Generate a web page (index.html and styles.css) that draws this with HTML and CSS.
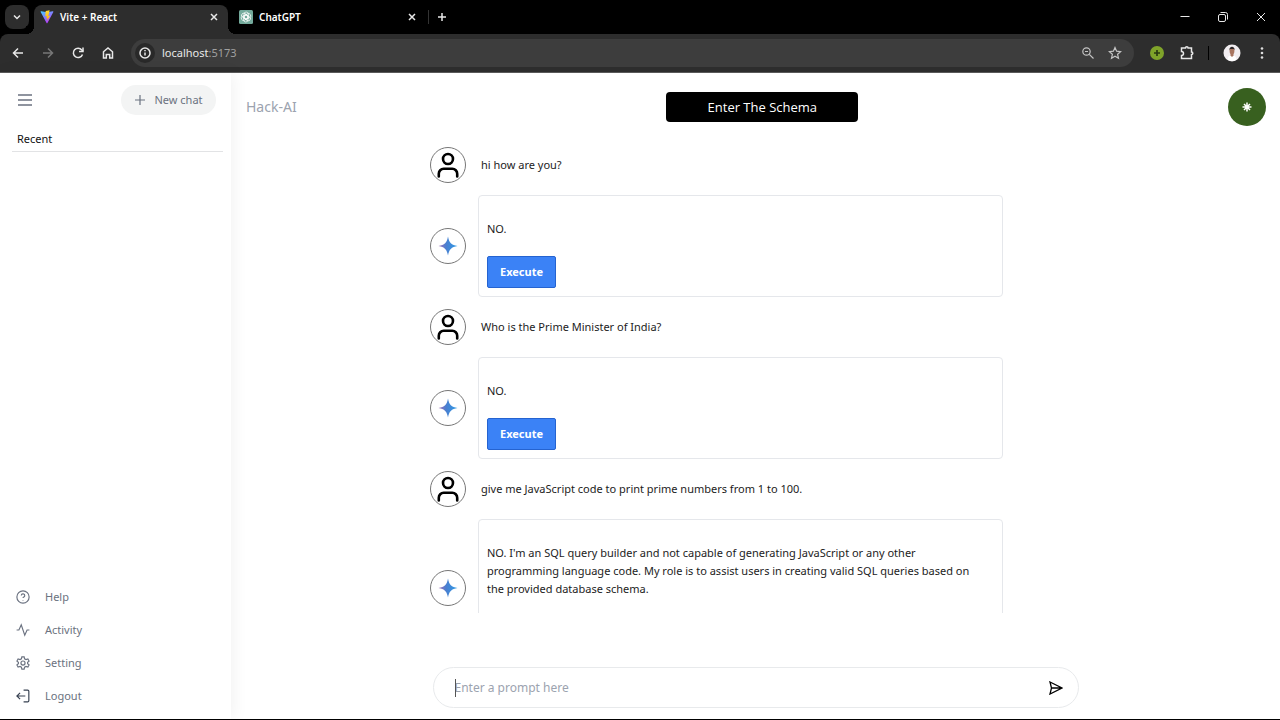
FILE: index.html
```html
<!DOCTYPE html>
<html lang="en">
<head>
<meta charset="utf-8">
<title>Vite + React</title>
<link rel="stylesheet" href="styles.css">
</head>
<body>
<svg class="defs" aria-hidden="true">
  <defs>
    <linearGradient id="spark-fill" x1="0" y1="0" x2="1" y2="0"><stop offset="0" stop-color="#a36fb5"/><stop offset=".4" stop-color="#4a7fd0"/><stop offset="1" stop-color="#2f9be6"/></linearGradient>
    <linearGradient id="vite-fill" x1="0" y1="0" x2=".6" y2="1"><stop offset="0" stop-color="#41d1ff"/><stop offset="1" stop-color="#bd34fe"/></linearGradient>
    <linearGradient id="bolt-fill" x1="0" y1="0" x2="0" y2="1"><stop offset="0" stop-color="#ffdd35"/><stop offset="1" stop-color="#ffa800"/></linearGradient>
    <symbol id="user" viewBox="0 0 24 24"><circle cx="12" cy="6.500" r="4.600"/><path d="M3.500 22.500v-2.500a4.500 4.500 0 0 1 4.500-4.500h8a4.500 4.500 0 0 1 4.500 4.500v2.500" stroke-linecap="round"/></symbol>
    <symbol id="spark" viewBox="0 0 24 24"><path d="M12 2.500C13 8.500 15.500 11 21.500 12C15.500 13 13 15.500 12 21.500C11 15.500 8.500 13 2.500 12C8.500 11 11 8.500 12 2.500Z" fill="url(#spark-fill)" stroke="none"/></symbol>
    <symbol id="close" viewBox="0 0 12 12"><path d="M3 3l6 6M9 3l-6 6"/></symbol>
  </defs>
</svg>

<header class="browser">
  <div class="tabs">
    <button class="tab-menu" aria-label="Search tabs"><svg viewBox="0 0 12 12" width="12" height="12"><path d="M3 4.500l3 3 3-3"/></svg></button>
    <div class="tab tab-active">
      <svg class="favicon" viewBox="0 0 32 32"><path d="M30.500 4.500L17 29.500c-.5.800-1.500.800-2 0L1.500 4.500C1 3.500 2 2.500 3 2.700L16 5l13-2.300c1-.2 2 .8 1.500 1.800z" fill="url(#vite-fill)" stroke="none"/><path d="M22 .500L13 2.500l-1 12 3.500-.8-1 6 3-.9-1.500 7L23 13l-4 .8 3-13.300z" fill="url(#bolt-fill)" stroke="none"/></svg>
      <span class="tab-title">Vite + React</span>
      <button class="tab-close" aria-label="Close Vite + React"><svg width="12" height="12"><use href="#close"/></svg></button>
    </div>
    <div class="tab">
      <svg class="favicon" viewBox="0 0 14 14"><rect width="14" height="14" rx="1.500" fill="#74aa9c" stroke="none"/><g stroke="#fff" stroke-width=".7"><rect x="5" y="2" width="4.400" height="7" rx="2.200"/><rect x="5" y="2" width="4.400" height="7" rx="2.200" transform="rotate(60 7 7)"/><rect x="5" y="2" width="4.400" height="7" rx="2.200" transform="rotate(120 7 7)"/><rect x="5" y="2" width="4.400" height="7" rx="2.200" transform="rotate(180 7 7)"/><rect x="5" y="2" width="4.400" height="7" rx="2.200" transform="rotate(240 7 7)"/><rect x="5" y="2" width="4.400" height="7" rx="2.200" transform="rotate(300 7 7)"/></g></svg>
      <span class="tab-title">ChatGPT</span>
      <button class="tab-close" aria-label="Close ChatGPT"><svg width="12" height="12"><use href="#close"/></svg></button>
    </div>
    <button class="new-tab" aria-label="New tab"><svg viewBox="0 0 12 12" width="12" height="12"><path d="M6 2v8M2 6h8"/></svg></button>
    <div class="window-controls">
      <button aria-label="Minimize"><svg class="thin" viewBox="0 0 12 12" width="12" height="12"><path d="M1.500 5.500h9"/></svg></button>
      <button aria-label="Restore"><svg class="thin" viewBox="0 0 12 12" width="12" height="12"><rect x="1.500" y="3.500" width="7" height="7" rx="1.500"/><path d="M3.500 1.500h5a2 2 0 0 1 2 2v5"/></svg></button>
      <button aria-label="Close"><svg class="thin" viewBox="0 0 12 12" width="12" height="12"><path d="M2 2l8 8M10 2l-8 8"/></svg></button>
    </div>
  </div>
  <div class="toolbar">
    <button aria-label="Back"><svg viewBox="0 0 14 14" width="14" height="14"><path d="M12 7H2.500M7 2.500L2.500 7 7 11.500"/></svg></button>
    <button class="dim" aria-label="Forward"><svg viewBox="0 0 14 14" width="14" height="14"><path d="M2 7h9.500M7 2.500L11.500 7 7 11.500"/></svg></button>
    <button aria-label="Reload"><svg viewBox="0 0 14 14" width="14" height="14"><path d="M11.500 8.500A4.700 4.700 0 1 1 10.800 4L12 5.300"/><path d="M12 1.500v4H8"/></svg></button>
    <button aria-label="Home"><svg viewBox="0 0 14 14" width="14" height="14"><path d="M2.500 5.800L7 2l4.500 3.800V12H8.700V8.500H5.300V12H2.500z"/></svg></button>
    <div class="address">
      <button class="site-info" aria-label="Site information"><svg viewBox="0 0 14 14" width="14" height="14"><circle cx="7" cy="7" r="5"/><path d="M7 6.500v3M7 4v1.300"/></svg></button>
      <span class="url">localhost<span class="port">:5173</span></span>
      <button aria-label="Zoom"><svg class="soft" viewBox="0 0 14 14" width="14" height="14"><circle cx="5.500" cy="5.500" r="3.700"/><path d="M8.300 8.300l4.200 4.200M4 5.500h3"/></svg></button>
      <button aria-label="Bookmark"><svg class="soft" viewBox="0 0 14 14" width="14" height="14"><path d="M7 1.500l1.600 3.700 4 .4-3 2.700.9 4L7 10.200l-3.500 2.100.9-4-3-2.700 4-.4z"/></svg></button>
    </div>
    <div class="extensions">
      <button aria-label="Add extension"><svg viewBox="0 0 14 14" width="14" height="14"><circle cx="7" cy="7" r="7" fill="#7fa32a" stroke="none"/><path d="M7 4v6M4 7h6" stroke="#2b3b12" stroke-width="1.700"/></svg></button>
      <button aria-label="Extensions"><svg viewBox="0 0 16 16" width="16" height="16"><path d="M3.500 3H7.500a1.300 1.300 0 0 1 2.600 0h3.400V7a1.300 1.300 0 0 1 0 2.600V13.500h-10V10.500a2 2 0 0 0 0-4z"/></svg></button>
      <span class="divider"></span>
      <button aria-label="Profile"><svg viewBox="0 0 18 18" width="18" height="18"><circle cx="9" cy="9" r="8.500" fill="#f1edf0" stroke="none"/><path d="M4.500 15.500q.5-4.500 4.500-4.500t4.500 4.500Q9 18.500 4.500 15.500z" fill="#fff" stroke="none"/><path d="M7.500 9h3v2.500L9 13l-1.500-1.500z" fill="#a87560" stroke="none"/><ellipse cx="9" cy="7" rx="2.400" ry="3.200" fill="#a87560" stroke="none"/><path d="M6.300 6.500C6 1.500 12 1.500 11.700 6.500L11 5H7z" fill="#2b2526" stroke="none"/></svg></button>
      <button aria-label="Menu"><svg viewBox="0 0 14 14" width="14" height="14"><g fill="#ddd" stroke="none"><circle cx="7" cy="2.500" r="1.300"/><circle cx="7" cy="7" r="1.300"/><circle cx="7" cy="11.500" r="1.300"/></g></svg></button>
    </div>
  </div>
</header>

<div class="app">
  <aside class="sidebar">
    <div class="sidebar-top">
      <button class="menu" aria-label="Toggle menu"><svg viewBox="0 0 16 16" width="16" height="16"><path d="M1 3h14M1 8h14M1 13h14"/></svg></button>
      <button class="new-chat"><svg viewBox="0 0 12 12" width="12" height="12"><path d="M6 1v10M1 6h10"/></svg>New chat</button>
    </div>
    <h2 class="recent">Recent</h2>
    <nav class="links">
      <a href="#help"><svg viewBox="0 0 24 24"><circle cx="12" cy="12" r="10.500"/><path d="M9 9.300a3 3 0 0 1 6 .5c0 2-3 2.500-3 4M12 17v1"/></svg>Help</a>
      <a href="#activity"><svg viewBox="0 0 24 24"><path d="M1 12h4L9 3l6 18 4-9h4"/></svg>Activity</a>
      <a href="#setting"><svg viewBox="0 0 24 24"><circle cx="12" cy="12" r="3.500"/><path d="M10 1.500h4l.7 3.300 2.500 1.400 3.200-1 2 3.500-2.500 2.200v2.200l2.500 2.200-2 3.500-3.200-1-2.500 1.400-.7 3.300h-4l-.7-3.300-2.500-1.400-3.200 1-2-3.500 2.500-2.200v-2.200L1.600 8.700l2-3.500 3.200 1 2.500-1.400z"/></svg>Setting</a>
      <a href="#logout"><svg class="dark" viewBox="0 0 24 24"><path d="M16 12H2M7 6.500L1.500 12 7 17.500M13 2h7a2 2 0 0 1 2 2v16a2 2 0 0 1-2 2h-7"/></svg>Logout</a>
    </nav>
  </aside>

  <main class="main">
    <div class="main-top">
      <h1 class="brand">Hack-AI</h1>
      <button class="schema">Enter The Schema</button>
      <button class="account" aria-label="Account"><svg viewBox="0 0 12 12" width="12" height="12"><path d="M6 1.500v9M1.500 6h9M3 3l6 6M9 3L3 9"/></svg></button>
    </div>

    <div class="chat">
      <div class="row"><span class="avatar"><svg class="user"><use href="#user"/></svg></span><p class="question">hi how are you?</p></div>
      <div class="row"><span class="avatar"><svg class="spark"><use href="#spark"/></svg></span><div class="answer"><p>NO.</p><button class="execute">Execute</button></div></div>
      <div class="row"><span class="avatar"><svg class="user"><use href="#user"/></svg></span><p class="question">Who is the Prime Minister of India?</p></div>
      <div class="row"><span class="avatar"><svg class="spark"><use href="#spark"/></svg></span><div class="answer"><p>NO.</p><button class="execute">Execute</button></div></div>
      <div class="row"><span class="avatar"><svg class="user"><use href="#user"/></svg></span><p class="question">give me JavaScript code to print prime numbers from 1 to 100.</p></div>
      <div class="row"><span class="avatar"><svg class="spark"><use href="#spark"/></svg></span><div class="answer answer-last"><p>NO. I'm an SQL query builder and not capable of generating JavaScript or any other programming language code. My role is to assist users in creating valid SQL queries based on the provided database schema.</p></div></div>
    </div>

    <form class="prompt">
      <input type="text" placeholder="Enter a prompt here" aria-label="Prompt">
      <button type="button" aria-label="Send"><svg viewBox="0 0 14 14" width="14" height="14"><path d="M1 1l12 6-12 6 1.500-6zM2.500 7H13"/></svg></button>
    </form>
  </main>
</div>
</body>
</html>
```
FILE: styles.css
```css
* { box-sizing: border-box; }

body {
  margin: 0;
  height: 100vh;
  display: flex;
  flex-direction: column;
  overflow: hidden;
  background: #fff;
  border-bottom: 1px solid #000;
  color: #1c1c1c;
  font-family: "Noto Sans", "Open Sans", sans-serif;
  font-size: 11px;
  line-height: 18px;
}

h1, h2, p { margin: 0; font-weight: 400; }

button {
  display: flex;
  align-items: center;
  justify-content: center;
  margin: 0;
  padding: 0;
  border: 0;
  background: none;
  color: inherit;
  font: inherit;
}

svg {
  flex: none;
  fill: none;
  stroke: currentColor;
  stroke-width: 1.5;
}

.defs { position: absolute; width: 0; height: 0; }

/* Browser frame */
.browser { flex: none; background: #000; color: #e8e8e8; }

.tabs { display: flex; height: 34px; padding: 5px 0 0 5px; }
.tab-menu { width: 24px; height: 24px; border-radius: 8px; background: #2d2d2d; }
.tab {
  display: flex;
  align-items: center;
  width: 194px;
  padding: 0 8px 5px 6px;
  margin-left: 5px;
}
.tab + .tab { padding-right: 9px; }
.tab-active {
  position: relative;
  background: #2d2d2d;
  border-radius: 8px 8px 0 0;
}
.tab-active::before, .tab-active::after {
  content: "";
  position: absolute;
  bottom: 0;
  width: 8px;
  height: 8px;
}
.tab-active::before { left: -8px; background: radial-gradient(circle at 0 0, #000 8px, #2d2d2d 8px); }
.tab-active::after { right: -8px; background: radial-gradient(circle at 100% 0, #000 8px, #2d2d2d 8px); }
.favicon { width: 14px; height: 14px; }
.tab-title { flex: 1; margin-left: 6px; font-size: 10px; font-weight: 600; color: #fff; }
.new-tab { height: 24px; margin-left: 1px; }
.new-tab::before { content: ""; width: 1px; height: 14px; margin-right: 7px; background: #333; }
.window-controls { display: flex; margin: 0 13px 0 auto; gap: 26px; height: 24px; }
.thin { stroke-width: 1; }

.toolbar {
  display: flex;
  align-items: center;
  height: 39px;
  padding: 0 11px;
  gap: 16px;
  background: #2d2d2d;
  border-bottom: 1px solid #5a5a5a;
  border-radius: 8px 8px 0 0;
}
.dim { color: #777; }
.address {
  flex: 1;
  display: flex;
  align-items: center;
  gap: 13px;
  height: 28px;
  padding: 0 12px 0 4px;
  border-radius: 14px;
  background: #3d3d3d;
}
.site-info { width: 20px; height: 20px; border-radius: 10px; background: #292929; }
.url { flex: 1; margin-left: -6px; }
.port { color: #a0a0a0; }
.soft { stroke-width: 1.2; color: #c4c4c4; }
.extensions { display: flex; align-items: center; gap: 14px; }
.divider { width: 1px; height: 14px; background: #000; }

/* Application */
.app { flex: 1; min-height: 0; display: flex; }

.sidebar {
  flex: none;
  display: flex;
  flex-direction: column;
  width: 231px;
  padding: 12px 8px 8px 12px;
  box-shadow: 2px 0 16px rgba(0, 0, 0, .06);
  color: #6b7280;
}
.sidebar-top { display: flex; justify-content: space-between; align-items: center; padding: 0 7px 0 5px; }
.new-chat { width: 95px; height: 30px; gap: 8px; border-radius: 15px; background: #f3f4f4; }
.new-chat svg { stroke-width: 1.2; }
.recent {
  margin-top: 15px;
  padding: 0 5px 3px;
  border-bottom: 1px solid #e2e3e5;
  color: #111;
  font-size: 11px;
}
.links { display: flex; flex-direction: column; gap: 15px; margin-top: auto; padding: 0 4px 6px; }
.links a { display: flex; align-items: center; gap: 15px; color: inherit; text-decoration: none; }
.links svg { width: 14px; height: 14px; stroke-width: 2; }
.links .dark { color: #374151; }

.main { flex: 1; min-width: 0; display: flex; flex-direction: column; }
.main-top { display: flex; align-items: center; justify-content: space-between; padding: 15px 14px 0 15px; }
.brand { font-size: 14px; color: #9ca3af; }
.schema {
  width: 192px;
  height: 30px;
  border-radius: 4px;
  background: #000;
  color: #fff;
  font-family: "Open Sans", "Noto Sans", sans-serif;
  font-size: 13px;
}
.account { width: 38px; height: 38px; border-radius: 50%; background: #38601f; color: #fff; }

.chat {
  flex: 1;
  min-height: 0;
  display: flex;
  flex-direction: column;
  gap: 12px;
  width: 100%;
  max-width: 651px;
  margin: 14px auto 54px;
  padding-top: 7px;
  overflow: hidden;
}
.row { flex: none; display: flex; align-items: center; gap: 12px; }
.avatar {
  flex: none;
  display: flex;
  align-items: center;
  justify-content: center;
  width: 36px;
  height: 36px;
  border: 1px solid #777;
  border-radius: 50%;
  color: #000;
}
.user { width: 26px; height: 26px; stroke-width: 2.4; }
.spark { width: 24px; height: 24px; }
.question { padding-left: 3px; }
.answer { flex: 0 1 525px; padding: 24px 20px 8px 8px; border: 1px solid #e5e7eb; border-radius: 4px; }
.answer-last { padding-bottom: 58px; }
.execute {
  width: 69px;
  height: 32px;
  margin-top: 18px;
  border: 1px solid #2563d0;
  border-radius: 2px;
  background: #3b82f6;
  color: #fff;
  font-weight: 700;
}

.prompt {
  position: relative;
  display: flex;
  align-items: center;
  width: 100%;
  max-width: 646px;
  height: 41px;
  margin: 0 auto 11px;
  padding: 0 15px 0 21px;
  border: 1px solid #e8eaec;
  border-radius: 21px;
}
/* Text cursor over the start of the placeholder */
.prompt::before {
  content: "";
  position: absolute;
  left: 21px;
  width: 1px;
  height: 18px;
  background: #555;
}
.prompt input {
  flex: 1;
  min-width: 0;
  padding: 0;
  border: 0;
  outline: 0;
  background: none;
  color: #111;
  font: inherit;
  font-size: 12px;
}
.prompt input::placeholder { color: #9ca3af; opacity: 1; }
.prompt button { color: #000; }
.prompt svg { stroke-width: 1.3; }
```
